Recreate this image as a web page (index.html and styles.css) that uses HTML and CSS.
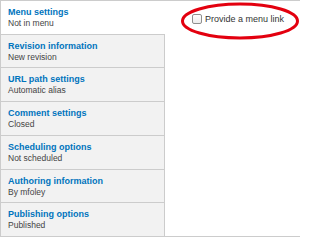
FILE: index.html
```html
<!DOCTYPE html>
<html>
<head>
<meta charset="utf-8">
<link rel="stylesheet" href="styles.css">
</head>
<body>
<div class="vtabs">
  <ul class="menu">
    <li class="item selected"><a class="title">Menu settings</a><span class="summary">Not in menu</span></li>
    <li class="item"><a class="title">Revision information</a><span class="summary">New revision</span></li>
    <li class="item"><a class="title">URL path settings</a><span class="summary">Automatic alias</span></li>
    <li class="item"><a class="title">Comment settings</a><span class="summary">Closed</span></li>
    <li class="item"><a class="title">Scheduling options</a><span class="summary">Not scheduled</span></li>
    <li class="item"><a class="title">Authoring information</a><span class="summary">By mfoley</span></li>
    <li class="item"><a class="title">Publishing options</a><span class="summary">Published</span></li>
  </ul>
  <div class="pane">
    <label class="option"><input type="checkbox" class="check"><span>Provide a menu link</span></label>
    <svg class="circle" width="122" height="40" viewBox="0 0 122 40" aria-hidden="true">
      <ellipse cx="60" cy="20" rx="57.5" ry="17" fill="none" stroke="#e3000f" stroke-width="3"/>
    </svg>
  </div>
</div>
</body>
</html>
```
FILE: styles.css
```css
html, body {
  margin: 0;
  padding: 0;
  background: #fff;
}
body {
  font-family: "Liberation Sans", Arial, sans-serif;
  color: #333;
}
.vtabs {
  display: flex;
  box-sizing: border-box;
  width: 300px;
  height: 237px;
  border: 1px solid #ccc;
  border-right: none;
}
.menu {
  list-style: none;
  margin: 0;
  padding: 0;
  width: 164px;
  flex: none;
  display: flex;
  flex-direction: column;
}
.item {
  flex: 1;
  box-sizing: border-box;
  background: #f2f2f2;
  border-right: 1px solid #ccc;
  border-top: 1px solid #ccc;
  padding: 6px 0 0 7px;
  display: flex;
  flex-direction: column;
}
.item:first-child {
  border-top: none;
}
.item.selected {
  background: #fff;
  border-right-color: #fff;
}
.title {
  font-size: 9px;
  line-height: 11px;
  font-weight: bold;
  color: #0074bd;
}
.summary {
  font-size: 8.5px;
  line-height: 10px;
  color: #444;
}
.pane {
  position: relative;
  flex: 1;
  padding: 13px 0 0 27px;
}
.option {
  display: flex;
  align-items: center;
  gap: 3px;
  font-size: 9px;
  line-height: 10px;
  color: #333;
}
.check {
  -webkit-appearance: none;
  appearance: none;
  margin: 0;
  width: 10px;
  height: 10px;
  box-sizing: border-box;
  border: 1px solid #8f8f8f;
  border-radius: 2px;
  background: linear-gradient(#fff, #ededed);
}
.circle {
  position: absolute;
  left: 15px;
  top: 0;
}
```
